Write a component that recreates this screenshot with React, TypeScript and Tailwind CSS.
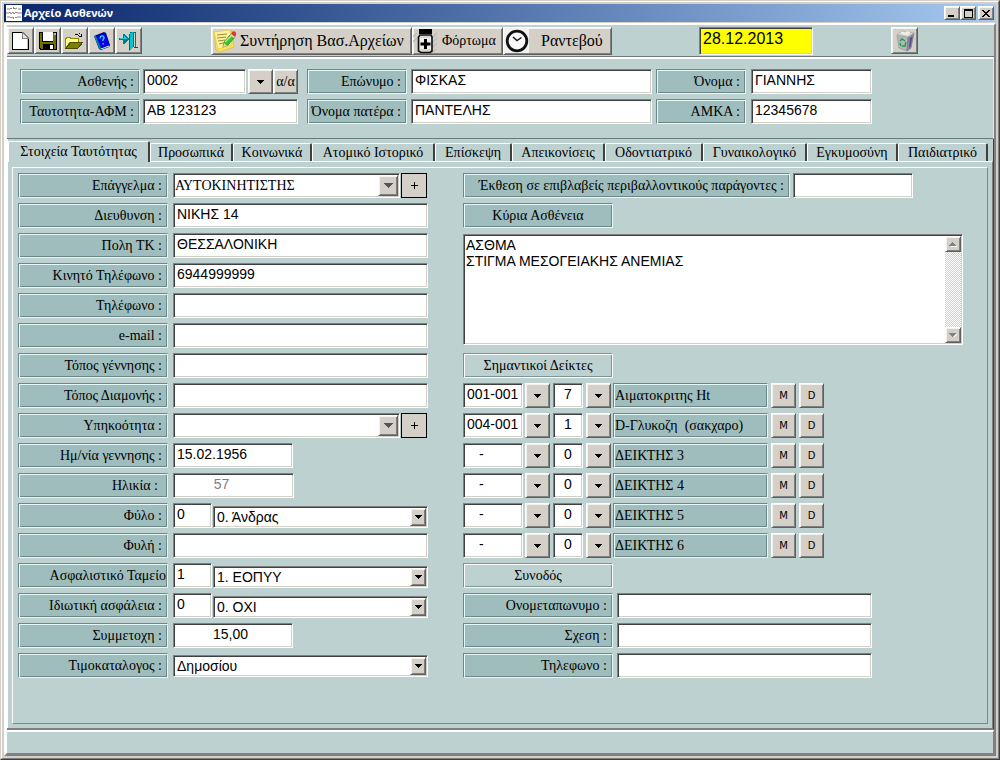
import React from "react";
import { clsx } from "clsx";

const SUNKEN =
  "border border-t-[#808080] border-l-[#808080] border-r-white border-b-white shadow-[inset_1px_1px_#404040,inset_-1px_-1px_#d4d0c8]";
const RAISED =
  "bg-[#d4d0c8] border border-t-white border-l-white border-r-[#606060] border-b-[#606060] shadow-[inset_1px_1px_#f4f2ee,inset_-1px_-1px_#808080]";
const ETCHED =
  "border border-t-[#6b8787] border-l-[#6b8787] border-r-[#e2fafa] border-b-[#e2fafa] shadow-[inset_1px_1px_#e2fafa,inset_-1px_-1px_#6b8787]";
const SERIF = "font-['Liberation_Serif',serif] text-[14px] leading-[16px]";
const SANS = "font-['Liberation_Sans',sans-serif] text-[14px] leading-[16px]";

function Caption({ id, text, className }: { id: string; text: string; className?: string }) {
  return (
    <label
      htmlFor={id}
      className={clsx(
        "flex h-[25px] shrink-0 items-center overflow-hidden bg-[#9fbdbd] whitespace-nowrap",
        ETCHED,
        SERIF,
        className,
      )}
    >
      {text}
    </label>
  );
}

function Section({ text }: { text: string }) {
  return (
    <h2
      className={clsx(
        "flex h-[25px] w-[150px] items-center justify-center border border-t-[#7d9694] border-l-[#7d9694] border-r-white border-b-white shadow-[inset_1px_1px_#fff,inset_-1px_-1px_#7d9694]",
        SERIF,
      )}
    >
      {text}
    </h2>
  );
}

function Box({
  id,
  value = "",
  className,
  label,
}: {
  id: string;
  value?: string;
  className?: string;
  label?: string;
}) {
  return (
    <input
      id={id}
      type="text"
      aria-label={label}
      defaultValue={value}
      className={clsx("h-[25px] min-w-0 bg-white pb-1 pl-[3px] outline-none", SUNKEN, SANS, className)}
    />
  );
}

function Triangle({ fill = "#000" }: { fill?: string }) {
  return (
    <svg width="7" height="4" viewBox="0 0 7 4" shapeRendering="crispEdges" aria-hidden="true">
      <path d="M0 0h7v1H6v1H5v1H4v1H3V3H2V2H1V1H0z" fill={fill} />
    </svg>
  );
}

function Picker({ label }: { label: string }) {
  return (
    <button
      type="button"
      aria-label={label}
      className={clsx("flex size-[25px] shrink-0 items-center justify-center", RAISED)}
    >
      <Triangle />
    </button>
  );
}

function Select({ id, value, label }: { id: string; value: string; label?: string }) {
  return (
    <div className="relative min-w-0 flex-1">
      <select
        id={id}
        aria-label={label}
        className={clsx("block h-[22px] w-full appearance-none bg-white pl-[3px] outline-none", SUNKEN, SANS)}
      >
        <option>{value}</option>
      </select>
      <span
        className={clsx(
          "pointer-events-none absolute inset-y-0.5 right-0.5 flex w-4 items-center justify-center",
          RAISED,
        )}
      >
        <Triangle />
      </span>
    </div>
  );
}

function Combo({ id, value }: { id: string; value: string }) {
  return (
    <div className="mr-px flex min-w-0 flex-1">
      <div className="relative min-w-0 flex-1">
        <select
          id={id}
          className={clsx("block h-[25px] w-full appearance-none bg-white pl-px outline-none", SUNKEN, SERIF)}
        >
          <option>{value}</option>
        </select>
        <span
          className={clsx(
            "pointer-events-none absolute inset-y-0.5 right-0.5 flex w-5 items-center justify-center",
            RAISED,
          )}
        >
          <svg width="9" height="5" viewBox="0 0 9 5" shapeRendering="crispEdges" aria-hidden="true">
            <path d="M0 0h9v1H8v1H7v1H6v1H5v1H4V4H3V3H2V2H1V1H0z" fill="#555" />
          </svg>
        </span>
      </div>
      <button
        type="button"
        aria-label="Προσθήκη"
        className="ml-px flex h-[25px] w-[26px] items-center justify-center border border-black bg-[#d4d0c8]"
      >
        <svg width="7" height="7" viewBox="0 0 7 7" shapeRendering="crispEdges" aria-hidden="true">
          <path d="M3 0h1v3h3v1H4v3H3V4H0V3h3z" />
        </svg>
      </button>
    </div>
  );
}

function Row({ children }: { children: React.ReactNode }) {
  return <div className="flex h-[25px] items-center gap-[5px]">{children}</div>;
}

const CAP = "w-[150px] justify-end pr-[5px]";

function NewIcon() {
  return (
    <svg width="20" height="20" viewBox="0 0 20 20" shapeRendering="crispEdges" aria-hidden="true">
      <path d="M1 1h11l6 6v12H1z" fill="#fff" />
      <path d="M1 1h11v1H2v16h15V7h1v12H1z" fill="#000" />
      <path d="M11 1h2v1h1v1h1v1h1v1h1v1h1v2h-7z" fill="#808080" />
      <path d="M12 3h1v1h1v1h1v1h1v1h-4z" fill="#e4e4e4" />
      <path d="M16 8h1v10h-1z" fill="#c0c0c0" />
    </svg>
  );
}

function SaveIcon() {
  return (
    <svg width="20" height="20" viewBox="0 0 20 20" shapeRendering="crispEdges" aria-hidden="true">
      <path d="M1 1h18v18H2v-1H1z" fill="#000" />
      <path d="M2 2h2v9h11V2h3v16h-2v-5H5v5H3v-1H2z" fill="#6f7000" />
      <path d="M5 1h10v9H5z" fill="#fff" />
      <path d="M5 13h11v5H5z" fill="#000" />
      <path d="M12 14h3v4h-3z" fill="#fff" />
      <path d="M16 2h2v2h-2z" fill="#c0c0c0" />
    </svg>
  );
}

function OpenIcon() {
  return (
    <svg width="21" height="20" viewBox="0 0 21 20" shapeRendering="crispEdges" aria-hidden="true">
      <path d="M1 7h1V6h4v1h8v4H6l-4 6H1z" fill="#ffff90" stroke="#8a8a00" />
      <path d="M2 17l5-6h12l-5 6z" fill="#808000" stroke="#4a4a00" />
      <path d="M11 3h3v1h-3zM14 4h1v1h-1zM15 5h2V3h1v3h-3zM15 2h1v1h-1z" fill="#000" />
    </svg>
  );
}

function HelpIcon() {
  return (
    <svg width="20" height="20" viewBox="0 0 20 20" aria-hidden="true">
      <path d="M2 5l10-4 2 1 4 12-1 2-8 3-2-1z" fill="#000070" />
      <path d="M4 5l9-3 4 12-8 3z" fill="#0000f0" />
      <path d="M2 5l2 0 5 12v1.500l-1.500-.5z" fill="#0088a8" />
      <path d="M9 17.500l8-3v1l-8 3z" fill="#dff" />
      <path
        d="M8 7.500c0-3 4-3.500 4-.8 0 1.500-1.500 1.500-1.200 3.300M11.200 12v1.500"
        stroke="#30e8ff"
        strokeWidth="1.300"
        fill="none"
      />
    </svg>
  );
}

function ExitIcon() {
  return (
    <svg width="20" height="20" viewBox="0 0 20 20" shapeRendering="crispEdges" aria-hidden="true">
      <path d="M11 1h6v15h-1V2h-5z" fill="#007878" />
      <path d="M10 3l4-2v15l-4 4z" fill="#00c8d0" />
      <path d="M10 3h1v16h-1zM14 2h1v14h-1z" fill="#006878" />
      <path d="M0 7h4V3h1l5 5-5 5H4V9H0z" fill="#007c90" />
      <path d="M1 7h4V5l3 3H1z" fill="#20c8d8" />
      <path d="M15 16h4v1h-4z" fill="#005868" />
    </svg>
  );
}

function NotesIcon() {
  return (
    <svg width="24" height="24" viewBox="0 0 24 24" aria-hidden="true">
      <path d="M1 4l18-2 2 16-14 5-4-2z" fill="#f7e35c" stroke="#d8b92c" strokeWidth=".7" />
      <path d="M1 3l16-2 2 15-14 4z" fill="#fff29a" stroke="#e2c83e" strokeWidth=".7" />
      <path d="M4 6l10-1M4 9l9-1M5 12l7-1M6 15l4-1" stroke="#9a8a3a" />
      <path d="M10 18l1-5 7-8 4 3-7 8z" fill="#42c22e" stroke="#218a18" strokeWidth=".8" />
      <path d="M12 13l7-7" stroke="#b4f29a" strokeWidth="1.300" />
      <path d="M10 18l1-4 3 3z" fill="#f4d6a0" />
      <path d="M18 5l1-2c2-2 5 0 4 3l-1 2z" fill="#e03a2a" />
      <path d="M17 6l1-1 4 3-1 1z" fill="#ddd" />
    </svg>
  );
}

function BottleIcon() {
  return (
    <svg width="24" height="26" viewBox="0 0 24 26" aria-hidden="true">
      <path d="M19 10l5-5M19 15l5-5M19 20l5-5M19 25l4-4M0 9l4-4M0 14l4-4" stroke="#c0bcb5" strokeWidth="1.500" />
      <path d="M6 1h13v5H6z" fill="#000" />
      <path d="M7 7h11l1 2v14l-2 1.500H8L5.500 23V9z" fill="#d8d5cf" stroke="#111" strokeWidth="1.600" />
      <path d="M7 10h11v11H7z" fill="#f0efec" />
      <path d="M11 11h3v3.500h3.500v3H14V21h-3v-3.500H7.500v-3H11z" fill="#000" />
    </svg>
  );
}

function ClockIcon() {
  return (
    <svg width="24" height="24" viewBox="0 0 24 24" aria-hidden="true">
      <path d="M0 0h24v24H0z" fill="#f2f2f2" />
      <circle cx="12" cy="12" r="9.800" fill="#f8f8f8" stroke="#111" strokeWidth="2.800" />
      <path d="M8 8l4 3.500 4.500-3" fill="none" stroke="#111" strokeWidth="1.400" />
    </svg>
  );
}

function TrashIcon() {
  return (
    <svg width="22" height="24" viewBox="0 0 22 24" aria-hidden="true">
      <path d="M3 6l11 2-1 14-8-3z" fill="#b4b6b8" stroke="#94969a" strokeWidth=".7" />
      <path d="M14 8l6-4-3 15-4 3z" fill="#8a86a4" stroke="#7a788c" strokeWidth=".7" />
      <path d="M16 9l2.500-1.500-2 10L15 19z" fill="#585084" />
      <path d="M3 6l5-4 12 2-6 4z" fill="#dfe3de" stroke="#a4a4a4" strokeWidth=".7" />
      <path d="M5 5l3-3 3 1 3-1.500 3 2.500-4 3-4-1z" fill="#eef0e8" stroke="#b6bab0" strokeWidth=".6" />
      <path d="M6 12l2-2 3 2M12 13l-1 4-3 0M7 17l-1-3" fill="none" stroke="#16a34a" strokeWidth="1.400" />
    </svg>
  );
}

function ToolButton({ label, children }: { label: string; children: React.ReactNode }) {
  return (
    <button type="button" aria-label={label} className={clsx("flex size-[27px] items-center justify-center", RAISED)}>
      {children}
    </button>
  );
}

const TABS: [string, string][] = [
  ["Προσωπικά", "w-[83px]"],
  ["Κοινωνικά", "w-[79px]"],
  ["Ατομικό Ιστορικό", "w-[123px]"],
  ["Επίσκεψη", "w-[77px]"],
  ["Απεικονίσεις", "w-[93px]"],
  ["Οδοντιατρικό", "w-[98px]"],
  ["Γυναικολογικό", "w-[104px]"],
  ["Εγκυμοσύνη", "w-[91px]"],
  ["Παιδιατρικό", "w-[90px]"],
];

const MARKERS = [
  { code: "001-001", n: "7", name: "Αιματοκριτης Ht" },
  { code: "004-001", n: "1", name: "D-Γλυκοζη  (σακχαρο)" },
  { code: "-", n: "0", name: "ΔΕΙΚΤΗΣ 3" },
  { code: "-", n: "0", name: "ΔΕΙΚΤΗΣ 4" },
  { code: "-", n: "0", name: "ΔΕΙΚΤΗΣ 5" },
  { code: "-", n: "0", name: "ΔΕΙΚΤΗΣ 6" },
];

const WINBTN = "flex h-[14px] w-4 items-center justify-center";

function TitleBar() {
  return (
    <header className="flex h-[18px] items-center bg-linear-to-r from-[#0a246a] to-[#a6caf0] pr-0.5 pl-0.5">
      <svg width="16" height="16" viewBox="0 0 16 16" aria-hidden="true">
        <path d="M0 0h16v16H0z" fill="#fff" />
        <path
          d="M1 4h3l1-1 1 1M8 3l1 1 2-1M12 4h3M0 8h3l1-1 1 2 2-2 1 2 2-2 1 1h5M1 12h3l1 1 2-1M9 12l1 1 1-1h4M7.500 2v2M7.500 12v2"
          fill="none"
          stroke="#777"
          strokeWidth=".9"
        />
      </svg>
      <h1 className="ml-0.5 font-['Noto_Sans',sans-serif] text-[11px] leading-[16px] font-bold text-white">
        Αρχείο Ασθενών
      </h1>
      <div className="ml-auto flex">
        <button type="button" aria-label="Ελαχιστοποίηση" className={clsx(WINBTN, RAISED)}>
          <svg width="8" height="8" viewBox="0 0 8 8" shapeRendering="crispEdges">
            <path d="M0 6h6v2H0z" />
          </svg>
        </button>
        <button type="button" aria-label="Μεγιστοποίηση" className={clsx(WINBTN, RAISED)}>
          <svg width="9" height="9" viewBox="0 0 9 9" shapeRendering="crispEdges">
            <path d="M0 0h9v9H0zM1 2v6h7V2z" fillRule="evenodd" />
          </svg>
        </button>
        <button type="button" aria-label="Κλείσιμο" className={clsx("ml-0.5", WINBTN, RAISED)}>
          <svg width="8" height="7" viewBox="0 0 8 7" shapeRendering="crispEdges">
            <path d="M0 0h2v1h1v1h2V1h1V0h2v1H7v1H6v1H5v1h1v1h1v1h1v1H6V6H5V5H3v1H2v1H0V6h1V5h1V4h1V3H2V2H1V1H0z" />
          </svg>
        </button>
      </div>
    </header>
  );
}

function Toolbar() {
  const wide = "flex h-7 items-center";
  return (
    <div className="flex h-[34px] items-start border-b-2 border-b-white pt-0.5 shadow-[inset_0_-1px_#6e7a7a]">
      <ToolButton label="Νέο"><NewIcon /></ToolButton>
      <ToolButton label="Αποθήκευση"><SaveIcon /></ToolButton>
      <ToolButton label="Άνοιγμα"><OpenIcon /></ToolButton>
      <ToolButton label="Βοήθεια"><HelpIcon /></ToolButton>
      <ToolButton label="Έξοδος"><ExitIcon /></ToolButton>
      <div className="ml-[69px] flex font-['Liberation_Serif',serif] leading-[18px] whitespace-nowrap">
        <button type="button" className={clsx("w-[201px] gap-[3px] pl-px text-[16px]", wide, RAISED)}>
          <NotesIcon />
          Συντήρηση Βασ.Αρχείων
        </button>
        <button type="button" className={clsx("w-[91px] gap-[5px] text-[14px]", wide, RAISED)}>
          <BottleIcon />
          Φόρτωμα
        </button>
        <button type="button" className={clsx("w-[109px] gap-3 pl-px text-[16px]", wide, RAISED)}>
          <ClockIcon />
          Ραντεβού
        </button>
      </div>
      <input
        type="text"
        aria-label="Ημερομηνία"
        defaultValue="28.12.2013"
        className={clsx(
          "ml-[87px] h-7 w-[114px] bg-[#ffff00] pb-1 pl-[3px] font-['Liberation_Sans',sans-serif] text-[16px] leading-[18px] outline-none",
          SUNKEN,
        )}
      />
      <div className="mr-[76px] ml-auto">
        <ToolButton label="Διαγραφή"><TrashIcon /></ToolButton>
      </div>
    </div>
  );
}

function PatientHeader() {
  return (
    <div className="flex h-20 flex-col gap-[5px] border-r border-b border-r-[#dfe8e8] border-b-[#6e7a7a] pt-2.5 pr-[121px] pl-[13px]">
      <div className="flex">
        <Caption id="patient" text="Ασθενής :" className="w-[120px] justify-end pr-[5px]" />
        <Box id="patient" value="0002" className="ml-[3px] w-[103px]" />
        <div className="ml-0.5 flex">
          <Picker label="Επιλογή ασθενή" />
          <button type="button" className={clsx("h-[25px] w-[25px]", RAISED, SERIF)}>
            α/α
          </button>
        </div>
        <Caption id="surname" text="Επώνυμο :" className="ml-[9px] w-[100px] justify-end pr-[5px]" />
        <Box id="surname" value="ΦΙΣΚΑΣ" className="ml-1 flex-1" />
        <Caption id="name" text="Όνομα :" className="ml-1 w-[90px] justify-end pr-[5px]" />
        <Box id="name" value="ΓΙΑΝΝΗΣ" className="ml-[5px] w-[121px]" />
      </div>
      <div className="flex">
        <Caption id="afm" text="Ταυτοτητα-ΑΦΜ :" className="w-[120px] justify-end pr-[5px]" />
        <Box id="afm" value="ΑΒ 123123" className="ml-[3px] w-[155px]" />
        <Caption id="father" text="Όνομα πατέρα :" className="ml-[9px] w-[100px] justify-end pr-[5px]" />
        <Box id="father" value="ΠΑΝΤΕΛΗΣ" className="ml-1 flex-1" />
        <Caption id="amka" text="ΑΜΚΑ :" className="ml-1 w-[90px] justify-end pr-[5px]" />
        <Box id="amka" value="12345678" className="ml-[5px] w-[121px]" />
      </div>
    </div>
  );
}

function LeftForm() {
  return (
    <div className="flex w-[410px] flex-col gap-[5px]">
      <Row><Caption id="job" text="Επάγγελμα :" className={CAP} /><Combo id="job" value="ΑΥΤΟΚΙΝΗΤΙΣΤΗΣ" /></Row>
      <Row><Caption id="addr" text="Διευθυνση :" className={CAP} /><Box id="addr" value="ΝΙΚΗΣ 14" className="flex-1" /></Row>
      <Row><Caption id="city" text="Πολη ΤΚ :" className={CAP} /><Box id="city" value="ΘΕΣΣΑΛΟΝΙΚΗ" className="flex-1" /></Row>
      <Row><Caption id="mobile" text="Κινητό Τηλέφωνο :" className={CAP} /><Box id="mobile" value="6944999999" className="flex-1" /></Row>
      <Row><Caption id="phone" text="Τηλέφωνο :" className={CAP} /><Box id="phone" className="flex-1" /></Row>
      <Row><Caption id="email" text="e-mail :" className={CAP} /><Box id="email" className="flex-1" /></Row>
      <Row><Caption id="birthplace" text="Τόπος γέννησης :" className={CAP} /><Box id="birthplace" className="flex-1" /></Row>
      <Row><Caption id="residence" text="Τόπος Διαμονής :" className={CAP} /><Box id="residence" className="flex-1" /></Row>
      <Row><Caption id="nation" text="Υπηκοότητα :" className={CAP} /><Combo id="nation" value="" /></Row>
      <Row><Caption id="dob" text="Ημ/νία γεννησης :" className={CAP} /><Box id="dob" value="15.02.1956" className="w-[120px]" /></Row>
      <Row>
        <Caption id="age" text="Ηλικία :" className="w-[150px] justify-end pr-[9px]" />
        <Box id="age" value="57" className="w-[121px] pr-[27px] text-center text-[#808080]" />
      </Row>
      <Row>
        <Caption id="sex" text="Φύλο :" className={CAP} />
        <div className="flex flex-1 items-end gap-px">
          <Box id="sex" value="0" className="w-[39px]" />
          <Select id="sex-name" label="Φύλο" value="0. Άνδρας" />
        </div>
      </Row>
      <Row><Caption id="race" text="Φυλή :" className={CAP} /><Box id="race" className="flex-1" /></Row>
      <Row>
        <Caption id="fund" text="Ασφαλιστικό Ταμείο" className="w-[150px] justify-end pr-px" />
        <div className="flex flex-1 items-end gap-px">
          <Box id="fund" value="1" className="w-[39px]" />
          <Select id="fund-name" label="Ασφαλιστικό Ταμείο" value="1. ΕΟΠΥΥ" />
        </div>
      </Row>
      <Row>
        <Caption id="priv" text="Ιδιωτική ασφάλεια :" className={CAP} />
        <div className="flex flex-1 items-end gap-px">
          <Box id="priv" value="0" className="w-[39px]" />
          <Select id="priv-name" label="Ιδιωτική ασφάλεια" value="0. ΟΧΙ" />
        </div>
      </Row>
      <Row><Caption id="share" text="Συμμετοχη :" className={CAP} /><Box id="share" value="15,00" className="w-[120px] pr-2 text-center" /></Row>
      <Row><Caption id="price" text="Τιμοκαταλογος :" className={CAP} /><Select id="price" value="Δημοσίου" /></Row>
    </div>
  );
}

function ScrollButton({ up }: { up?: boolean }) {
  return (
    <button
      type="button"
      aria-label={up ? "Πάνω" : "Κάτω"}
      className={clsx("flex size-4 items-center justify-center", RAISED)}
    >
      <svg width="8" height="5" viewBox="0 0 8 5" shapeRendering="crispEdges">
        <path d={up ? "M1 5h7V4H2z" : "M5 4h1V3h1V2h1V1H7z"} fill="#fff" />
        <path d={up ? "M0 4h7V3H6V2H5V1H4V0H3v1H2v1H1v1H0z" : "M0 0h7v1H6v1H5v1H4v1H3V3H2V2H1V1H0z"} fill="#808080" />
      </svg>
    </button>
  );
}

function RightForm() {
  return (
    <div className="flex w-[500px] flex-col gap-[5px]">
      <div className="flex gap-[3px]">
        <Caption id="exposure" text="Έκθεση σε επιβλαβείς περιβαλλοντικούς παράγοντες :" className="w-[327px] justify-end pr-[5px]" />
        <Box id="exposure" className="w-[120px]" />
      </div>
      <Caption id="disease" text="Κύρια Ασθένεια" className="w-[150px] justify-center" />
      <div className="flex h-[115px] items-start pt-px">
        <div className={clsx("flex h-[111px] w-full bg-white p-px", SUNKEN)}>
          <textarea
            id="disease"
            className="min-w-0 flex-1 resize-none overflow-hidden pt-px pl-px font-['Liberation_Sans',sans-serif] text-[14px] leading-[16px] outline-none"
            defaultValue={"ΑΣΘΜΑ\nΣΤΙΓΜΑ ΜΕΣΟΓΕΙΑΚΗΣ ΑΝΕΜΙΑΣ"}
          />
          <div className="flex w-4 flex-col justify-between bg-[repeating-conic-gradient(#ffffff_0%_25%,#d4d0c8_0%_50%)] bg-[length:2px_2px]">
            <ScrollButton up />
            <ScrollButton />
          </div>
        </div>
      </div>
      <Section text="Σημαντικοί Δείκτες" />
      {MARKERS.map((m, i) => (
        <div key={i} className="flex">
          <Box
            id={`code-${i}`}
            label={`Κωδικός δείκτη ${i + 1}`}
            value={m.code}
            className={clsx("w-[60px]", m.code === "-" && "pl-[15px]")}
          />
          <div className="ml-0.5"><Picker label="Επιλογή κωδικού" /></div>
          <Box id={`num-${i}`} label={`Αριθμός δείκτη ${i + 1}`} value={m.n} className="ml-[3px] w-[30px] pr-[3px] text-center" />
          <div className="ml-[3px]"><Picker label="Επιλογή αριθμού" /></div>
          <Caption id={`code-${i}`} text={m.name} className="ml-0.5 w-[155px] pl-px whitespace-pre" />
          <div className="ml-[3px] flex gap-[3px] font-['DejaVu_Sans',sans-serif] text-[10px] leading-[12px]">
            <button type="button" className={clsx("size-[25px]", RAISED)}>M</button>
            <button type="button" className={clsx("size-[25px]", RAISED)}>D</button>
          </div>
        </div>
      ))}
      <Section text="Συνοδός" />
      <div className="flex gap-1"><Caption id="esc-name" text="Ονομεταπωνυμο :" className={CAP} /><Box id="esc-name" className="w-[255px]" /></div>
      <div className="flex gap-1"><Caption id="esc-rel" text="Σχεση :" className={CAP} /><Box id="esc-rel" className="w-[255px]" /></div>
      <div className="flex gap-1"><Caption id="esc-tel" text="Τηλεφωνο :" className={CAP} /><Box id="esc-tel" className="w-[255px]" /></div>
    </div>
  );
}

export default function App() {
  return (
    <div className="flex min-h-screen flex-col border border-t-[#d4d0c8] border-r-[#404040] border-b-[#404040] border-l-[#d4d0c8] bg-[#d4d0c8] text-black">
      <div className="flex flex-1 flex-col border border-t-white border-r-[#808080] border-b-[#808080] border-l-white p-0.5">
        <TitleBar />
        <main className="mt-px flex flex-1 flex-col border-t-2 border-r-2 border-b-[3px] border-l-[3px] border-t-white border-r-[#808080] border-b-[#808080] border-l-white bg-[#bdd1d0]">
          <Toolbar />
          <PatientHeader />
          <div className="flex flex-1 flex-col border-r border-b border-r-[#404040] border-b-[#404040] pt-0.5 shadow-[inset_1px_0_#fff]">
            <div role="tablist" className="flex h-5 items-end pl-px whitespace-nowrap">
              <button
                type="button"
                role="tab"
                aria-selected="true"
                className={clsx(
                  "relative -mb-px h-[21px] w-[142px] rounded-t-xs border-t border-r-2 border-l border-t-white border-r-[#404040] border-l-white bg-[#bdd1d0]",
                  SERIF,
                )}
              >
                Στοιχεία Ταυτότητας
              </button>
              {TABS.map(([name, width]) => (
                <button
                  key={name}
                  type="button"
                  role="tab"
                  aria-selected="false"
                  className={clsx(
                    "h-[18px] rounded-t-xs border-t border-r-2 border-l border-t-white border-r-[#404040] border-l-white",
                    SERIF,
                    width,
                  )}
                >
                  {name}
                </button>
              ))}
            </div>
            <div className="flex flex-1 border-t border-r border-b border-t-white border-r-[#808080] border-b-[#808080] pt-[5px] pr-1 pb-1 pl-[5px]">
              <div className="flex flex-1 gap-[35px] border border-t-white border-r-[#7d8886] border-b-[#7d8886] border-l-white p-[5px]">
                <LeftForm />
                <RightForm />
              </div>
            </div>
          </div>
          <footer className="h-[23px] border-t-2 border-r border-t-white border-r-[#808080] shadow-[0_-1px_#808080]" />
        </main>
      </div>
    </div>
  );
}
